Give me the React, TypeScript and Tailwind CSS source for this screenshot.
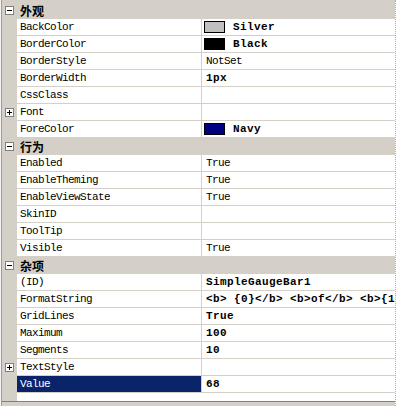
import React from "react";

type Prop = {
  name: string;
  value?: string;
  bold?: boolean;
  swatch?: string;
  expand?: boolean;
  selected?: boolean;
};

type Group = { title: string; props: Prop[] };

const GROUPS: Group[] = [
  {
    title: "外观",
    props: [
      { name: "BackColor", value: "Silver", bold: true, swatch: "#c0c0c0" },
      { name: "BorderColor", value: "Black", bold: true, swatch: "#000000" },
      { name: "BorderStyle", value: "NotSet" },
      { name: "BorderWidth", value: "1px", bold: true },
      { name: "CssClass" },
      { name: "Font", expand: true },
      { name: "ForeColor", value: "Navy", bold: true, swatch: "#000080" },
    ],
  },
  {
    title: "行为",
    props: [
      { name: "Enabled", value: "True" },
      { name: "EnableTheming", value: "True" },
      { name: "EnableViewState", value: "True" },
      { name: "SkinID" },
      { name: "ToolTip" },
      { name: "Visible", value: "True" },
    ],
  },
  {
    title: "杂项",
    props: [
      { name: "(ID)", value: "SimpleGaugeBar1", bold: true },
      { name: "FormatString", value: "<b> {0}</b> <b>of</b> <b>{1}</b>", bold: true },
      { name: "GridLines", value: "True", bold: true },
      { name: "Maximum", value: "100", bold: true },
      { name: "Segments", value: "10", bold: true },
      { name: "TextStyle", expand: true },
      { name: "Value", value: "68", bold: true, selected: true },
    ],
  },
];

const mono = "font-['Liberation_Mono','DejaVu_Sans_Mono',monospace] text-[11px]";

function Toggle({ open }: { open: boolean }) {
  return (
    <svg width="9" height="9" viewBox="0 0 9 9" className="block">
      <rect x="0.5" y="0.5" width="8" height="8" fill="#ffffff" stroke="#808080" />
      <path d="M2 4.5h5" stroke="#000" strokeWidth="1" />
      {!open && <path d="M4.5 2v5" stroke="#000" strokeWidth="1" />}
    </svg>
  );
}

function Row({ p }: { p: Prop }) {
  return (
    <div className="flex h-[17px]">
      <div className="flex w-[15px] items-center pl-[3px]">
        {p.expand && <Toggle open={false} />}
      </div>
      <div
        className={`flex w-[184px] items-center border-b border-[#d4d0c8] pl-[3px] ${
          p.selected ? "bg-[#0a246a] text-white" : "bg-white text-black"
        } ${mono} tracking-[-0.6px]`}
      >
        {p.name}
      </div>
      <div className="w-px bg-[#d4d0c8]" />
      <div className="flex min-w-0 flex-1 items-center overflow-hidden border-b border-[#d4d0c8] bg-white pl-[2px] text-black">
        {p.swatch && (
          <span
            className="mr-[8px] h-[12px] w-[21px] shrink-0 border border-black"
            style={{ background: p.swatch }}
          />
        )}
        {p.value && (
          <span
            className={`whitespace-pre ${mono} ${
              p.bold ? "font-bold tracking-[0.4px]" : "tracking-[-0.6px]"
            } ${p.swatch ? "" : "pl-[2px]"}`}
          >
            {p.value}
          </span>
        )}
      </div>
    </div>
  );
}

export default function App() {
  return (
    <div className="flex h-[406px] w-[398px] overflow-hidden bg-[#d4d0c8]">
      <div className="flex w-[395px] flex-col border-l border-[#f4f4f4]">
        <div className="flex flex-1 flex-col border-l border-[#a09c94] pt-[2px]">
          {GROUPS.map((g) => (
            <div key={g.title}>
              <div className="flex h-[17px] items-center">
                <div className="flex w-[15px] items-center pl-[3px]">
                  <Toggle open />
                </div>
                <span className="pl-[3px] font-['Noto_Sans_CJK_SC',sans-serif] text-[12px] font-bold leading-none text-black">
                  {g.title}
                </span>
              </div>
              {g.props.map((p) => (
                <Row key={p.name} p={p} />
              ))}
            </div>
          ))}
          <div className="flex h-[8px]">
            <div className="w-[15px]" />
            <div className="flex-1 bg-white" />
          </div>
          <div className="h-px bg-[#808080]" />
        </div>
      </div>
      <div className="w-[3px] border-l border-dotted border-[#b0b0b0] bg-white" />
    </div>
  );
}
